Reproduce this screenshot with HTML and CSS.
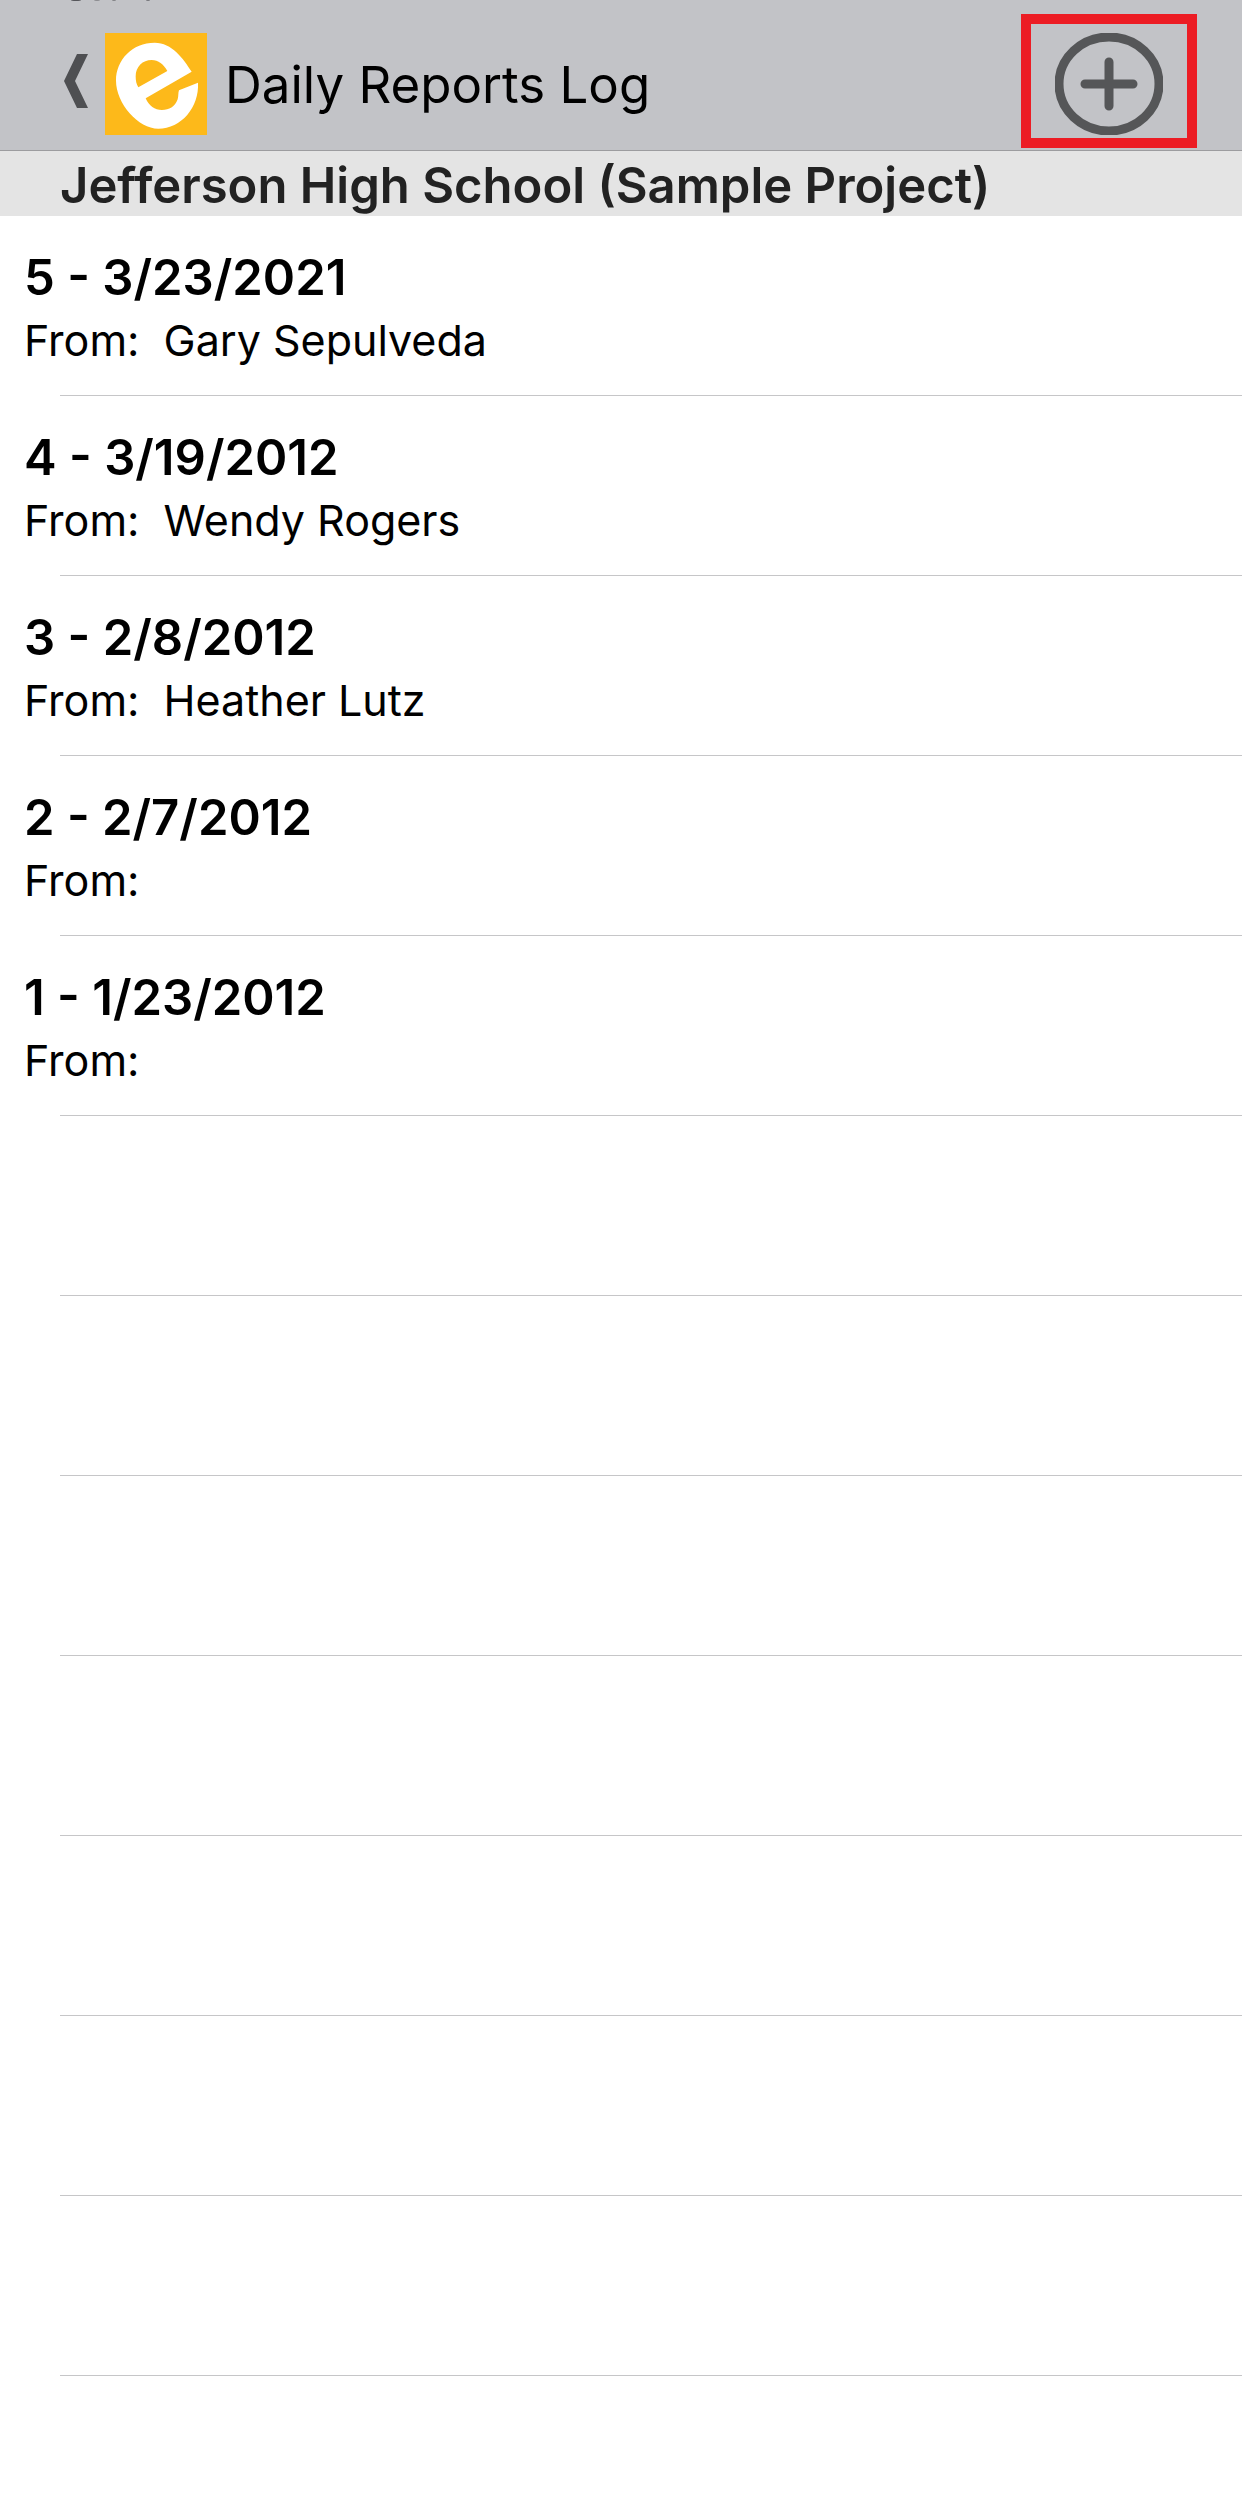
FILE: index.html
```html
<!DOCTYPE html>
<html lang="en">
<head>
    <meta charset="UTF-8">
    <meta name="viewport" content="width=device-width, initial-scale=1.0">
    <title>Daily Reports Log</title>
    <link rel="stylesheet" href="styles.css">
</head>
<body>
    <header class="top-bar">
        <!-- Tail of the status bar, scrolled almost out of view -->
        <svg class="status-tail" viewBox="0 0 90 2" aria-hidden="true">
            <ellipse cx="9" cy="0" rx="5" ry="1"/>
            <ellipse cx="30" cy="0" rx="3" ry="1" opacity="0.5"/>
            <ellipse cx="47" cy="0" rx="2" ry="1" opacity="0.6"/>
            <ellipse cx="81" cy="0" rx="2" ry="1" opacity="0.7"/>
        </svg>
        <div class="top-left">
            <a href="#" class="back-link" aria-label="Back">
                <svg class="chevron" viewBox="0 0 24 60">
                    <path d="M13 0H24L11 27L24 54H13L0 27Z"/>
                </svg>
            </a>
            <svg class="logo" viewBox="0 0 306 306" aria-hidden="true">
                <rect width="306" height="306" fill="#fdb91a"/>
                <path fill="#fff" fill-rule="evenodd" d="M260 116C234 76 201 29 149 29C82 29 33 80 33 143C33 211 100 287 160 287C229 287 283 222 279 149L222 172C219 180 221 188 218 199C209 222 193 231 171 231C149 231 132 219 122 196ZM100 163C94 153 92 143 92 130C92 101 113 81 140 81C160 81 176 94 187 114Z"/>
            </svg>
            <h1 class="page-title">Daily Reports Log</h1>
        </div>
        <button class="add-button" aria-label="Add report">
            <svg class="add-icon" viewBox="0 0 108 102">
                <ellipse cx="54" cy="51" rx="50" ry="47"/>
                <path d="M30 51H78M54 29V73"/>
            </svg>
        </button>
    </header>

    <h2 class="project-name">Jefferson High School (Sample Project)</h2>

    <ul class="report-list">
        <li>
            <a href="#" class="report">
                <span class="report-date">5 - 3/23/2021</span>
                <span class="report-from">From:&nbsp; Gary Sepulveda</span>
            </a>
        </li>
        <li>
            <a href="#" class="report">
                <span class="report-date">4 - 3/19/2012</span>
                <span class="report-from">From:&nbsp; Wendy Rogers</span>
            </a>
        </li>
        <li>
            <a href="#" class="report">
                <span class="report-date">3 - 2/8/2012</span>
                <span class="report-from">From:&nbsp; Heather Lutz</span>
            </a>
        </li>
        <li>
            <a href="#" class="report">
                <span class="report-date">2 - 2/7/2012</span>
                <span class="report-from">From:</span>
            </a>
        </li>
        <li>
            <a href="#" class="report">
                <span class="report-date">1 - 1/23/2012</span>
                <span class="report-from">From:</span>
            </a>
        </li>
        <!-- Empty rows -->
        <li></li>
        <li></li>
        <li></li>
        <li></li>
        <li></li>
        <li></li>
        <li></li>
    </ul>
</body>
</html>
```

FILE: styles.css
```css
* {
    box-sizing: border-box;
}
body {
    font-family: Inter, "Liberation Sans", sans-serif;
    background-color: #fff;
    color: #000;
    margin: 0;
}
.top-bar {
    position: relative;
    display: flex;
    justify-content: space-between;
    padding: 14px 45px 2px 64px;
    background-color: #c2c3c7;
    border-bottom: 1px solid #9c9c9f;
}
.status-tail {
    position: absolute;
    top: 0;
    left: 67px;
    width: 90px;
    height: 2px;
    fill: #55565a;
}
.top-left {
    display: flex;
    align-items: center;
    padding-top: 6px;
}
.back-link {
    display: flex;
    margin-right: 17px;
}
.chevron {
    width: 24px;
    height: 60px;
    fill: #4e4f52;
}
.logo {
    width: 102px;
    height: 102px;
}
.page-title {
    margin: 0 0 0 18px;
    padding-top: 2px;
    font-size: 51px;
    font-weight: 400;
    line-height: 64px;
}
.add-button {
    display: flex;
    padding: 9px 24px 3px 24px;
    background: none;
    border: 10px solid #ec1c24;
    cursor: pointer;
}
.add-icon {
    width: 108px;
    height: 102px;
    fill: none;
    stroke: #555658;
    stroke-width: 9;
    stroke-linecap: round;
}
.project-name {
    margin: 0;
    padding: 4px 60px 0;
    background-color: #e4e4e4;
    color: #222;
    font-size: 49px;
    font-weight: 600;
    line-height: 61px;
}
.report-list {
    list-style: none;
    margin: 0;
    padding: 0 0 0 60px;
}
.report-list li {
    height: 180px;
    border-bottom: 1px solid #c6c6c8;
}
.report {
    display: block;
    margin-left: -36px;
    padding-top: 30px;
    color: #000;
    text-decoration: none;
}
.report-date,
.report-from {
    display: block;
    line-height: 63px;
}
.report-date {
    font-size: 49px;
    font-weight: 600;
}
.report-from {
    font-size: 43px;
}
```
